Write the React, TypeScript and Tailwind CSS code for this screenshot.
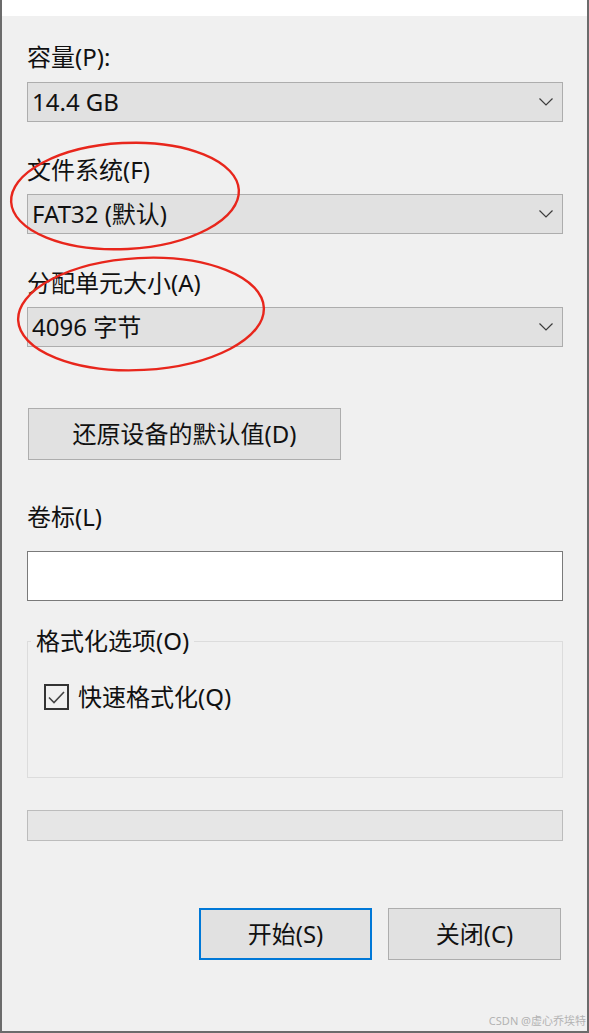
import React from "react";

const Chevron = () => (
  <svg width="14" height="8" viewBox="0 0 14 8" fill="none">
    <polyline points="0.5,0.5 7,7 13.5,0.5" stroke="#3c3c3c" strokeWidth="1.2" />
  </svg>
);

const Combo = ({ value, className = "" }: { value: string; className?: string }) => (
  <div
    className={`flex h-[40px] items-center justify-between border border-[#adadad] bg-[#e1e1e1] pl-[4px] pr-[9px] ${className}`}
  >
    <span className="leading-[32px]">{value}</span>
    <Chevron />
  </div>
);

export default function App() {
  return (
    <div
      className="relative h-[1033px] w-[589px] overflow-hidden border-b-2 border-l-2 border-r-2 border-[#6b6b6b] bg-[#f0f0f0] text-[24px] text-[#111]"
      style={{ fontFamily: '"Noto Sans", "Noto Sans CJK SC", sans-serif' }}
    >
      <div className="h-[16px] bg-white" />
      <div className="flex flex-col pl-[25px] pr-[24px]">
        <div className="mt-[25px] leading-[32px]">容量(P):</div>
        <Combo value="14.4 GB" className="mt-[9px]" />

        <div className="mt-[32px] leading-[32px]">文件系统(F)</div>
        <Combo value="FAT32 (默认)" className="mt-[8px]" />

        <div className="mt-[33px] leading-[32px]">分配单元大小(A)</div>
        <Combo value="4096 字节" className="mt-[8px]" />

        <button className="ml-[1px] mt-[61px] flex h-[52px] w-[313px] items-center justify-center border border-[#adadad] bg-[#e1e1e1] leading-[32px]">
          还原设备的默认值(D)
        </button>

        <div className="mt-[41px] leading-[32px]">卷标(L)</div>
        <div className="mt-[18px] h-[50px] border border-[#7a7a7a] bg-white" />

        <fieldset className="mt-[24px] h-[153px] border border-[#dcdcdc]">
          <legend className="ml-[3px] px-[5px] leading-[32px]">格式化选项(O)</legend>
          <div className="ml-[16px] mt-[24px] flex h-[32px] items-center gap-[9px]">
            <div className="flex h-[26px] w-[25px] items-center justify-center border-2 border-[#333]">
              <svg width="17" height="13" viewBox="0 0 17 13" fill="none">
                <polyline points="1,6.5 6,11.5 16,1" stroke="#444" strokeWidth="1.6" />
              </svg>
            </div>
            <span className="leading-[32px]">快速格式化(Q)</span>
          </div>
        </fieldset>

        <div className="mt-[32px] h-[31px] border border-[#bcbcbc] bg-[#e6e6e6]" />

        <div className="ml-[172px] mt-[67px] flex gap-[16px]">
          <button className="flex h-[52px] w-[173px] items-center justify-center border-2 border-[#0078d7] bg-[#e1e1e1] leading-[32px]">
            开始(S)
          </button>
          <button className="flex h-[52px] w-[173px] items-center justify-center border border-[#adadad] bg-[#e1e1e1] leading-[32px]">
            关闭(C)
          </button>
        </div>
      </div>

      <div className="absolute bottom-[3px] right-[1px] text-[11px] leading-[14px] text-[#b3b3b3]">
        CSDN @虚心乔埃特
      </div>

      <svg
        className="pointer-events-none absolute left-[-2px] top-0"
        width="589"
        height="1033"
        viewBox="0 0 589 1033"
        fill="none"
      >
        <ellipse cx="125" cy="196" rx="114" ry="53" stroke="#e8261c" strokeWidth="2.4" transform="rotate(-3 125 196)" />
        <ellipse cx="141" cy="314" rx="123" ry="56" stroke="#e8261c" strokeWidth="2.4" transform="rotate(-3 141 314)" />
      </svg>
    </div>
  );
}
